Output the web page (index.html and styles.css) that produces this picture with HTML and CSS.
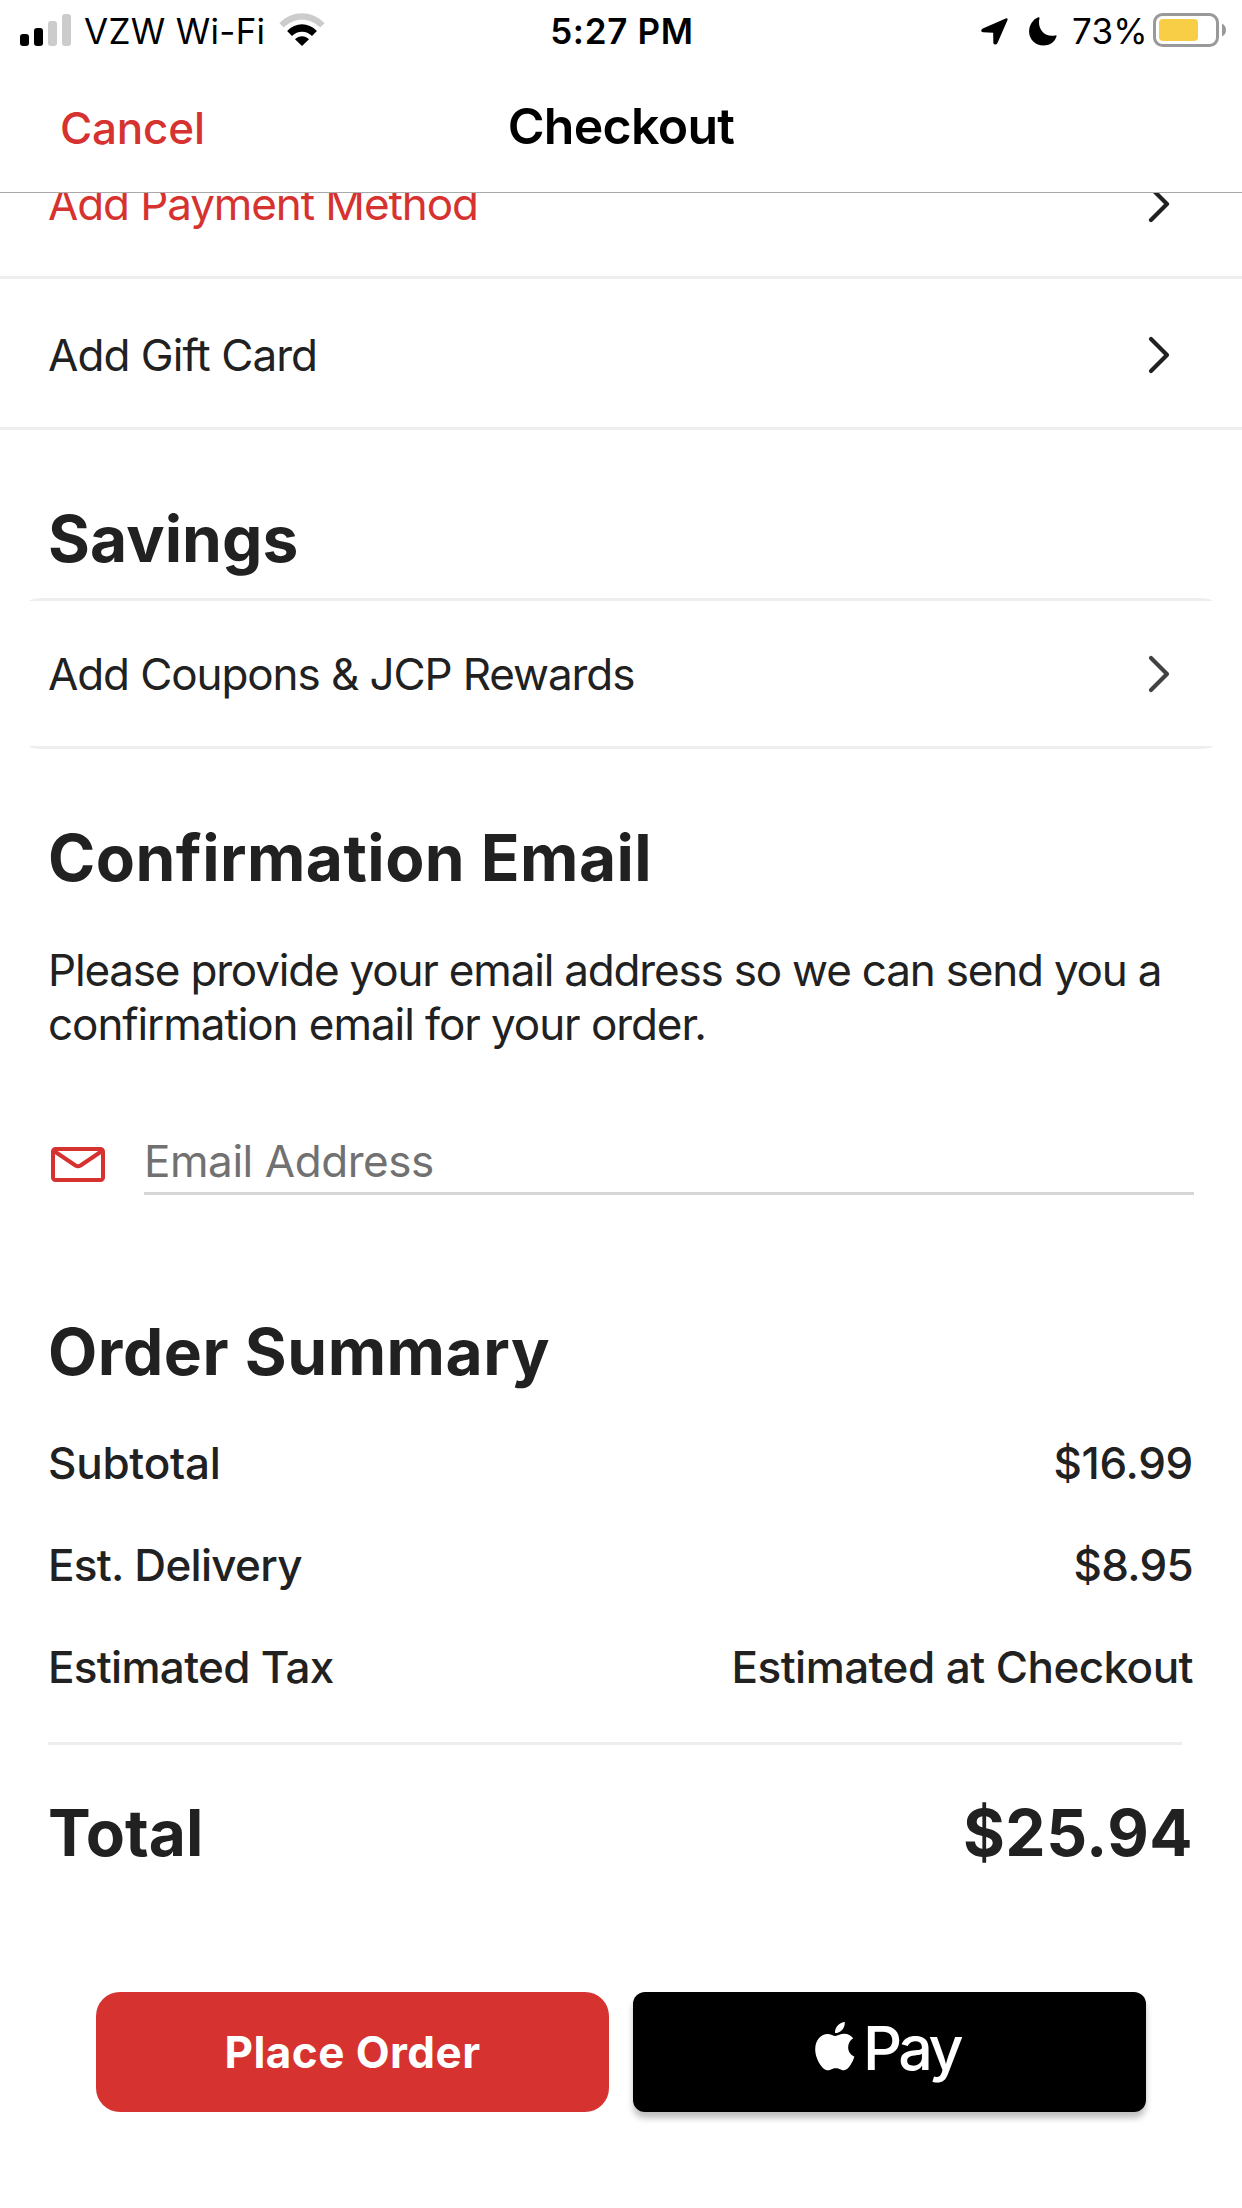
FILE: index.html
```html
<!DOCTYPE html>
<html lang="en">
<head>
<meta charset="utf-8">
<title>Checkout</title>
<link rel="stylesheet" href="styles.css">
</head>
<body>
<div class="status">
  <div class="status-left">
    <svg class="signal" width="51" height="32" viewBox="0 0 51 32">
      <rect x="0" y="20" width="9" height="12" rx="3"/>
      <rect x="14" y="14" width="9" height="18" rx="3"/>
      <rect x="28" y="7" width="9" height="25" rx="3" fill="#ccc"/>
      <rect x="42" y="0" width="9" height="32" rx="3" fill="#ccc"/>
    </svg>
    <span class="carrier">VZW Wi-Fi</span>
    <svg class="wifi" width="46" height="33" viewBox="0 0 46 33">
      <path d="M0.4 10.2C13 -3.1 33 -3.1 45.6 10.2L41.2 14.6C31 4.2 15 4.2 4.8 14.6Z" fill="#ccc"/>
      <path d="M8.1 18C16.5 9 29.5 9 37.9 18L33 23C27.5 17.2 18.500 17.200 13 23Z"/>
      <path d="M16 26.300C20 22.200 26 22.200 30 26.300L23 33Z"/>
    </svg>
  </div>
  <span class="time">5:27 PM</span>
  <div class="status-right">
    <svg width="27" height="27" viewBox="0 0 27 27"><path d="M24.700.4Q27.200-.4 26.400 2.300L16.500 25Q15.600 26.600 14 26.500Q12.300 26.300 12.300 24.400L12.200 14.700L2 14.300Q.2 14 .2 12.700Q.2 11.500 1.800 10.600Z"/></svg>
    <svg class="moon" width="28" height="29" viewBox="0 0 28 29"><path d="M9.300.3Q10.700-.2 10.500 1.200C8 11 15 20.800 26.200 18.400Q28 18.100 27.500 19.500C25.500 25.500 20.500 28.500 14.500 28.500C6.500 28.500.1 22.300.1 14.700C.1 8 4 2.200 9.300.3Z"/></svg>
    <span class="percent">73%</span>
    <svg class="battery" width="73" height="34" viewBox="0 0 73 34">
      <rect x="1.500" y="1.500" width="63" height="31" rx="8" fill="none" stroke="#999" stroke-width="3"/>
      <rect x="6" y="6" width="39" height="22" rx="4" fill="#f7ce46"/>
      <path d="M69 10.500Q73 12.500 73 17Q73 21.500 69 23.500Z" fill="#999"/>
    </svg>
  </div>
</div>

<header class="nav">
  <a class="cancel">Cancel</a>
  <h1 class="title">Checkout</h1>
</header>

<main class="content">
  <div class="row row-payment">
    <span class="label-payment">Add Payment Method</span>
    <svg class="chevron" width="24" height="40" viewBox="0 0 24 40"><path d="M4 4L20 20L4 36"/></svg>
  </div>
  <div class="row">
    <span class="label-gift">Add Gift Card</span>
    <svg class="chevron" width="24" height="40" viewBox="0 0 24 40"><path d="M4 4L20 20L4 36"/></svg>
  </div>

  <section class="savings">
    <h2 class="savings-title">Savings</h2>
    <div class="card">
      <span class="label-coupons">Add Coupons &amp; JCP Rewards</span>
      <svg class="chevron chevron-soft" width="24" height="40" viewBox="0 0 24 40"><path d="M4 4L20 20L4 36"/></svg>
    </div>
  </section>

  <section class="email">
    <h2>Confirmation Email</h2>
    <p class="note">Please provide your email address so we can send you a<br><span class="note-end">confirmation email for your order.</span></p>
    <div class="field">
      <svg class="envelope" width="54" height="35" viewBox="0 0 54 35">
        <rect x="2" y="2" width="50" height="31" rx="2.500"/>
        <path d="M3 4L24.500 18.500Q27 20 29.500 18.500L51 4"/>
      </svg>
      <div class="input">Email Address</div>
    </div>
  </section>

  <section class="summary">
    <h2 class="summary-title">Order Summary</h2>
    <div class="lines">
      <div class="line"><span class="subtotal">Subtotal</span><span class="amount">$16.99</span></div>
      <div class="line"><span>Est. Delivery</span><span>$8.95</span></div>
      <div class="line"><span>Estimated Tax</span><span class="tax-note">Estimated at Checkout</span></div>
    </div>
    <div class="total"><span class="total-label">Total</span><span class="total-value">$25.94</span></div>
  </section>

  <div class="actions">
    <button class="btn place-order">Place Order</button>
    <button class="btn apple-pay">
      <svg class="apple" width="40" height="49" viewBox="0 0 40 49"><path d="M29.800 0C30.200 5.800 25.800 11.200 20 11.100C19.500 5.600 24.500.4 29.800 0ZM20.400 13.900C22.500 13.900 25.500 11.700 29.500 11.700C33 11.800 36.200 13.400 38.200 16.300C31 21 31.600 31.300 39.400 34.700C38 39 33.800 48 29 48.200C25.700 48.300 24.700 46.200 20.900 46.200C17 46.200 15.700 48.200 12.700 48.300C7.800 48.500.2 37.500.2 27.300C.2 17.300 6.500 12.100 12.500 11.900C15.800 11.900 18.400 13.900 20.400 13.900Z"/></svg>
      <span class="pay">Pay</span>
    </button>
  </div>
</main>
</body>
</html>
```
FILE: styles.css
```css
* { box-sizing: border-box; }

body {
  margin: 0;
  width: 1242px;
  height: 2208px;
  overflow: hidden;
  background: #fff;
  color: #212121;
  font: 400 44px/54px Inter, "Liberation Sans", sans-serif;
}

h1, h2, p { margin: 0; }
svg { display: block; flex: none; }

/* Status bar */
.status {
  display: grid;
  grid-template-columns: 1fr auto 1fr;
  height: 62px;
  padding: 0 16px 0 20px;
  color: #000;
  font-size: 35px;
  line-height: 62px;
}
.status-left, .status-right { display: flex; align-items: center; white-space: nowrap; }
.status-right { justify-content: flex-end; }
.signal { margin-top: -2px; margin-right: 13px; }
.carrier { letter-spacing: .3px; }
.wifi { margin: -3px 0 0 14px; }
.time { font-weight: 600; letter-spacing: .7px; transform: translateX(-1px); }
.moon { margin-left: 21px; }
.percent { margin-left: 15px; letter-spacing: .3px; }
.battery { margin: -2px 0 0 5px; }

/* Navigation bar */
.nav {
  display: grid;
  grid-template-columns: 1fr auto 1fr;
  align-items: center;
  height: 131px;
  padding: 0 60px;
  border-bottom: 1px solid #aaa;
}
.cancel { padding-top: 2px; color: #d63230; font-weight: 450; letter-spacing: -.2px; }
.title { padding-bottom: 2px; color: #000; font-size: 50px; font-weight: 600; letter-spacing: -.7px; }

/* List rows; the first one is scrolled partly under the navigation bar */
.content { overflow: hidden; }
.row {
  display: flex;
  align-items: center;
  justify-content: space-between;
  height: 151px;
  padding: 4px 71px 0 48px;
  border-bottom: 3px solid #eee;
}
.row-payment { margin-top: -65px; }
.label-payment { color: #d63230; letter-spacing: -1.1px; }
.label-gift { letter-spacing: -.94px; }
.chevron { fill: none; stroke: #212121; stroke-width: 4.200; stroke-linecap: round; stroke-linejoin: round; }
.chevron-soft { stroke: #424242; }

h2 { font-size: 64px; line-height: 80px; font-weight: 700; letter-spacing: .45px; }

.savings { padding: 69px 29px 0; }
.savings-title { padding-left: 19px; letter-spacing: .1px; }
.card {
  display: flex;
  align-items: center;
  justify-content: space-between;
  height: 151px;
  margin-top: 19px;
  padding: 1px 42px 0 19px;
  border-top: 3px solid #eee;
  border-bottom: 3px solid #eee;
  border-radius: 14px / 3px;
}
.label-coupons { letter-spacing: -1.1px; }

/* Confirmation email */
.email { padding: 69px 48px 0; }
.note { margin-top: 45px; letter-spacing: -1.19px; white-space: nowrap; }
.note-end { letter-spacing: -1.07px; }
.field { display: grid; grid-template-columns: 96px 1fr; margin-top: 79px; }
.envelope { margin: 17px 0 0 3px; fill: none; stroke: #d63230; stroke-width: 4; stroke-linejoin: round; }
.input { height: 65px; border-bottom: 3px solid #d6d6d6; color: #717171; line-height: 62px; letter-spacing: -.44px; }

/* Order summary */
.summary { padding: 117px 48px 0; }
.summary-title { letter-spacing: .55px; }
.lines { margin: 20px 12px 0 0; padding-bottom: 24px; border-bottom: 3px solid #eee; }
.line {
  display: flex;
  justify-content: space-between;
  margin-right: -11px;
  font-weight: 500;
  line-height: 102px;
  letter-spacing: -.7px;
}
.subtotal { letter-spacing: -.25px; }
.amount { letter-spacing: -.3px; }
.tax-note { letter-spacing: -.55px; }
.total {
  display: flex;
  justify-content: space-between;
  margin-top: 48px;
  padding-right: 1px;
  font-size: 64px;
  font-weight: 700;
  line-height: 80px;
}
.total-label { letter-spacing: 0; }
.total-value { letter-spacing: .5px; }

/* Actions */
.actions { display: grid; grid-template-columns: 513px 513px; gap: 24px; margin-top: 119px; padding: 0 96px 40px; }
.btn {
  display: flex;
  align-items: center;
  justify-content: center;
  height: 120px;
  padding: 0;
  border: 0;
  color: #fff;
  font: inherit;
}
.place-order { border-radius: 24px; background: #d63230; font-weight: 650; letter-spacing: .45px; }
.apple-pay { border-radius: 12px; background: #000; box-shadow: 0 6px 6px rgba(0, 0, 0, .25); }
.apple { margin: -12px 8px 0 -4px; fill: #fff; }
.pay { margin-top: -9px; font-size: 61px; font-weight: 450; letter-spacing: -3.600px; }
```
